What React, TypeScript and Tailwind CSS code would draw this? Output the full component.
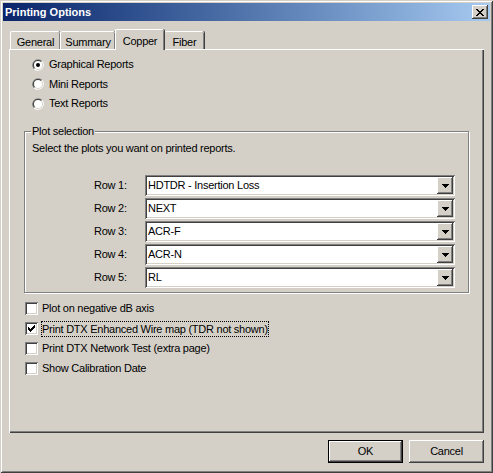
import React from "react";

// classic 3D edges
const raised =
  "shadow-[inset_-1px_-1px_#404040,inset_1px_1px_#ffffff,inset_-2px_-2px_#808080,inset_2px_2px_#d4d0c8]";
const sunken =
  "shadow-[inset_1px_1px_#808080,inset_-1px_-1px_#ffffff,inset_2px_2px_#404040,inset_-2px_-2px_#d4d0c8]";

const Radio = ({ checked }: { checked?: boolean }) => (
  <svg width="12" height="12" viewBox="0 0 12 12" className="shrink-0">
    <path d="M1.76 10.24 A6 6 0 0 1 10.24 1.76 Z" fill="#808080" />
    <path d="M10.24 1.76 A6 6 0 0 1 1.76 10.24 Z" fill="#ffffff" />
    <path d="M2.46 9.54 A5 5 0 0 1 9.54 2.46 Z" fill="#404040" />
    <path d="M9.54 2.46 A5 5 0 0 1 2.46 9.54 Z" fill="#d4d0c8" />
    <circle cx="6" cy="6" r="4" fill="#ffffff" />
    {checked && <circle cx="6" cy="6" r="2" fill="#000000" />}
  </svg>
);

// pixel tick, [x, y, width]
const tick: [number, number, number][] = [
  [9, 3, 1],
  [8, 4, 2],
  [3, 5, 1],
  [7, 5, 3],
  [3, 6, 2],
  [6, 6, 3],
  [3, 7, 5],
  [4, 8, 3],
  [5, 9, 1],
];

const Checkbox = ({ checked }: { checked?: boolean }) => (
  <div className={`relative w-[13px] h-[13px] shrink-0 bg-white ${sunken}`}>
    {checked && (
      <svg width="13" height="13" viewBox="0 0 13 13" className="absolute left-0 top-0" shapeRendering="crispEdges">
        {tick.map(([x, y, w]) => (
          <rect key={`${x}-${y}`} x={x} y={y} width={w} height={1} fill="#000" />
        ))}
      </svg>
    )}
  </div>
);

const Combo = ({ value }: { value: string }) => (
  <div className={`w-[310px] h-[21px] bg-white flex items-center p-[2px] ${sunken}`}>
    <span className="flex-1 pl-[1px] leading-[17px] text-black">{value}</span>
    <div className={`w-[16px] h-[17px] bg-[#d4d0c8] flex items-center justify-center ${raised}`}>
      <svg width="7" height="4" viewBox="0 0 7 4" shapeRendering="crispEdges">
        <path d="M0 0h7v1h-1v1h-1v1h-1v1h-1v-1h-1v-1h-1v-1h-1z" fill="#000" />
      </svg>
    </div>
  </div>
);

const tabs = [
  { label: "General", w: "w-[50px]" },
  { label: "Summary", w: "w-[55px]" },
  { label: "Copper", w: "w-[49px]", active: true },
  { label: "Fiber", w: "w-[40px]" },
];

const plots = ["HDTDR - Insertion Loss", "NEXT", "ACR-F", "ACR-N", "RL"];

const options = [
  { label: "Plot on negative dB axis" },
  { label: "Print DTX Enhanced Wire map (TDR not shown)", checked: true, focus: true },
  { label: "Print DTX Network Test (extra page)" },
  { label: "Show Calibration Date" },
];

export default function App() {
  return (
    <div
      className={`w-[493px] h-[473px] bg-[#d4d0c8] p-[3px] flex flex-col text-[11px] tracking-[-0.25px] text-black font-['Liberation_Sans',Arial,sans-serif] shadow-[inset_1px_1px_#d4d0c8,inset_-1px_-1px_#404040,inset_2px_2px_#ffffff,inset_-2px_-2px_#808080]`}
    >
      {/* title bar */}
      <div className="h-[18px] bg-gradient-to-r from-[#0a246a] to-[#a6caf0] flex items-center justify-between pl-[2px] pr-[2px]">
        <span className="font-bold text-white text-[11px] tracking-normal leading-[18px]">Printing Options</span>
        <div className={`w-[16px] h-[14px] bg-[#d4d0c8] flex items-center justify-center ${raised}`}>
          <svg width="8" height="7" viewBox="0 0 8 7" shapeRendering="crispEdges">
            <path
              d="M0 0h2v1h1v1h2v-1h1v-1h2v1h-1v1h-1v1h-1v1h1v1h1v1h1v1h-2v-1h-1v-1h-2v1h-1v1h-2v-1h1v-1h1v-1h1v-1h-1v-1h-1v-1h-1z"
              fill="#000"
            />
          </svg>
        </div>
      </div>

      <div className="flex flex-col px-[6px] pt-[8px]">
        {/* tab strip */}
        <div className="h-[20px] flex items-end pl-[1px]">
          {tabs.map((t) =>
            t.active ? (
              <div
                key={t.label}
                className={`${t.w} relative z-10 -mb-px h-[21px] bg-[#d4d0c8] rounded-t-[2px] border-t border-l border-white shadow-[inset_-1px_0_#808080,1px_0_#404040] flex justify-center pt-[3px]`}
              >
                {t.label}
              </div>
            ) : (
              <div
                key={t.label}
                className={`${t.w} h-[18px] bg-[#d4d0c8] rounded-t-[2px] border-t border-l border-white shadow-[inset_-1px_0_#808080,1px_0_#404040] flex justify-center pt-[2px]`}
              >
                {t.label}
              </div>
            )
          )}
        </div>

        {/* tab page */}
        <div className="h-[384px] flex flex-col shadow-[inset_1px_1px_#ffffff,inset_-1px_-1px_#404040,inset_-2px_-2px_#808080]">
          <div className="flex flex-col gap-[6.5px] pl-[23px] pt-[9px]">
            {["Graphical Reports", "Mini Reports", "Text Reports"].map((r, i) => (
              <div key={r} className="h-[13px] flex items-center gap-[5px]">
                <Radio checked={i === 0} />
                <span className="leading-[13px]">{r}</span>
              </div>
            ))}
          </div>

          {/* plot selection group */}
          <div className="relative ml-[15px] mt-[21px] w-[445px] h-[162px] border border-[#808080] shadow-[inset_1px_1px_#ffffff,1px_1px_#ffffff]">
            <span className="absolute left-[6px] -top-[7px] px-[1px] bg-[#d4d0c8] leading-[13px]">Plot selection</span>
            <div className="pl-[7px] pt-[10px] leading-[13px]">Select the plots you want on printed reports.</div>
            <div className="flex flex-col gap-[2px] pl-[69px] pt-[20px]">
              {plots.map((p, i) => (
                <div key={p} className="flex items-center">
                  <span className="w-[51px]">Row {i + 1}:</span>
                  <Combo value={p} />
                </div>
              ))}
            </div>
          </div>

          <div className="flex flex-col gap-[7px] pl-[16px] pt-[9px]">
            {options.map((o) => (
              <div key={o.label} className="h-[13px] flex items-center gap-[3px]">
                <Checkbox checked={o.checked} />
                {o.focus ? (
                  <span className="h-[16px] leading-[16px] px-[1px] outline-1 outline-dotted outline-black -outline-offset-1">
                    {o.label}
                  </span>
                ) : (
                  <span className="px-[1px] leading-[13px]">{o.label}</span>
                )}
              </div>
            ))}
          </div>
        </div>

        {/* buttons */}
        <div className="flex justify-end gap-[6px] mt-[7px]">
          <button className="w-[75px] h-[23px] border border-black bg-[#d4d0c8] shadow-[inset_-1px_-1px_#404040,inset_1px_1px_#ffffff,inset_-2px_-2px_#808080] text-[11px]">
            OK
          </button>
          <button className={`w-[75px] h-[23px] bg-[#d4d0c8] text-[11px] ${raised}`}>Cancel</button>
        </div>
      </div>
    </div>
  );
}
